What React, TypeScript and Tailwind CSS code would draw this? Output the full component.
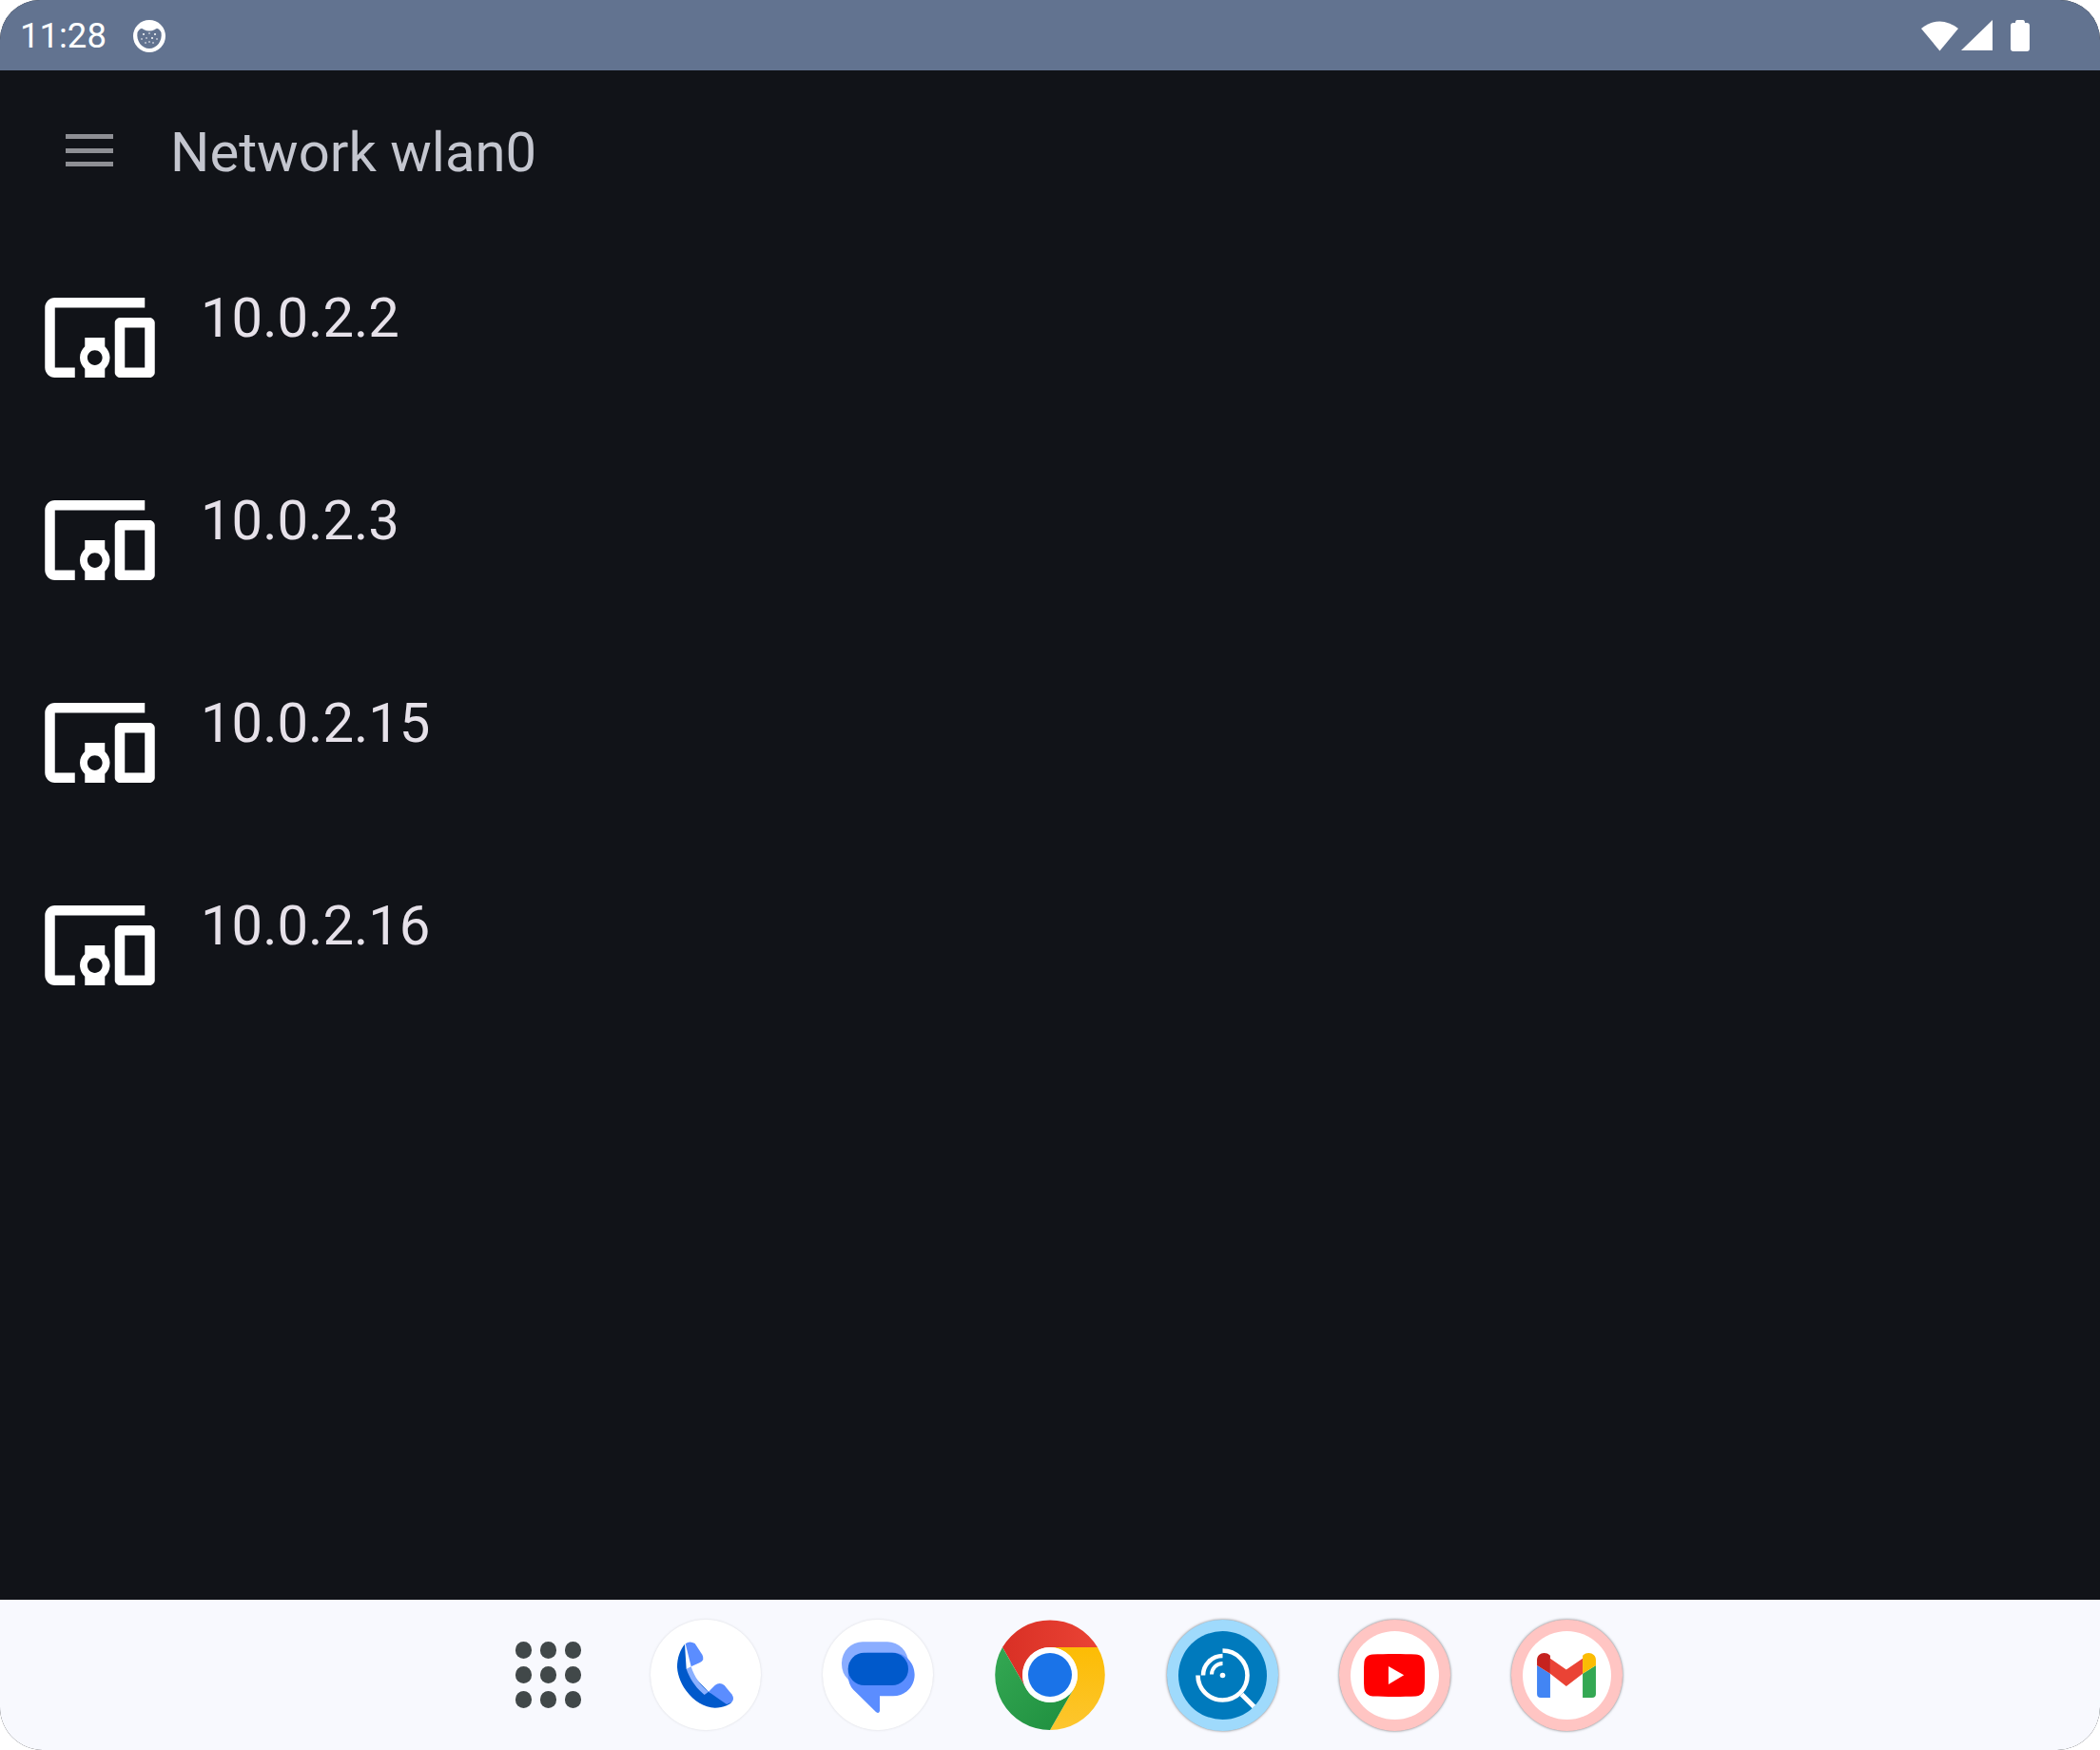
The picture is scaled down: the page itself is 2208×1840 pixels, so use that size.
const DEVICE = "M3 6h18V4H3c-1.1 0-2 .9-2 2v12c0 1.1.9 2 2 2h4v-2H3V6zm10 6H9v1.78c-.61.55-1 1.33-1 2.22s.39 1.67 1 2.22V20h4v-1.78c.61-.55 1-1.34 1-2.22s-.39-1.67-1-2.22V12zm-2 5.5c-.83 0-1.5-.67-1.5-1.5s.67-1.5 1.5-1.5 1.5.67 1.5 1.5-.67 1.5-1.5 1.5zM22 8h-6c-.5 0-1 .5-1 1v10c0 .5.5 1 1 1h6c.5 0 1-.5 1-1V9c0-.5-.5-1-1-1zm-1 10h-4v-8h4v8z";

function Row({ ip }: { ip: string }) {
  return (
    <div className="flex h-[213px] items-start pl-[42px]">
      <svg viewBox="0 0 24 24" className="h-[126px] w-[126px] shrink-0" fill="#ffffff">
        <path d={DEVICE} />
      </svg>
      <div className="ml-[43px] text-[58px] leading-[84px] font-normal text-[#e6e1e9]">{ip}</div>
    </div>
  );
}

function Phone() {
  return (
    <svg viewBox="555 98 345 345" className="h-[115px] w-[115px]">
      <path fill="#0059cb" d="M660 172C645 190 636 215 636 245C640 310 700 373 755 373C775 373 795 368 808 355L735 322L665 250Z" />
      <path fill="#8ab0ff" d="M665 250L680 243C690 275 710 305 735 322L722 332C695 310 675 280 665 250Z" />
      <path fill="#5b8dff" d="M662 171Q675 160 692 170L715 205Q724 222 708 230L680 243Z" />
      <path fill="#5b8dff" d="M735 322L755 302Q770 290 785 302L808 330Q818 345 808 355L792 362Z" />
    </svg>
  );
}

function Messages() {
  return (
    <svg viewBox="1098 98 345 345" className="h-[115px] w-[115px]">
      <rect x="1155" y="165" width="210" height="137" rx="66" fill="#8aadff" />
      <path fill="#5b8dff" d="M1243 199H1317C1355 199 1385 230 1385 268C1385 306 1355 336 1317 336H1275V383Q1272 394 1263 386L1192 316Q1175 298 1175 268C1175 230 1205 199 1243 199Z" />
      <rect x="1175" y="199" width="190" height="103" rx="51" fill="#0059cb" />
    </svg>
  );
}

function Chrome() {
  return (
    <svg viewBox="-58 -58 116 116" className="h-[116px] w-[116px]">
      <defs>
        <linearGradient id="cr" x1="0" y1="0" x2="1" y2="0"><stop offset="0" stopColor="#d93025" /><stop offset="1" stopColor="#ea4335" /></linearGradient>
        <linearGradient id="cy" x1="0" y1="0" x2="0" y2="1"><stop offset="0" stopColor="#fcbc04" /><stop offset="1" stopColor="#fdc62f" /></linearGradient>
        <linearGradient id="cg" x1="0" y1="0" x2="1" y2="1"><stop offset="0" stopColor="#34a853" /><stop offset="1" stopColor="#1e8e3e" /></linearGradient>
      </defs>
      <path fill="url(#cr)" d="M-50 -29A58 58 0 0 1 50 -29L0 -29A29 29 0 0 0 -25 14.5Z" />
      <path fill="url(#cy)" d="M50 -29A58 58 0 0 1 0 58L25 14.5A29 29 0 0 0 0 -29Z" />
      <path fill="url(#cg)" d="M0 58A58 58 0 0 1 -50 -29L-25 14.5A29 29 0 0 0 25 14.5Z" />
      <circle r="29" fill="#ffffff" />
      <circle r="23" fill="#1a73e8" />
    </svg>
  );
}

function Scanner() {
  return (
    <div className="-mx-[0.5px] flex h-[117px] w-[117px] items-center justify-center rounded-full bg-[#9fdafc] shadow-[0_0_3px_rgba(0,0,0,0.55)]">
      <svg viewBox="-46.5 -46.5 93 93" className="h-[93px] w-[93px]">
        <circle r="46.5" fill="#007abd" />
        <g fill="none" stroke="#ffffff" strokeWidth="4.6">
          <path d="M0 -26A26 26 0 1 1 -26 0" />
          <path d="M-20.5 0A20.5 20.5 0 0 1 0 -20.5" />
          <path d="M-11.5 0A11.5 11.5 0 0 1 0 -11.5" strokeWidth="4" transform="translate(0 -1)" />
          <path d="M20 20L33 33" strokeWidth="5.2" />
        </g>
        <circle r="2.8" fill="#ffffff" />
      </svg>
    </div>
  );
}

function Youtube() {
  return (
    <div className="-mx-[0.5px] flex h-[117px] w-[117px] items-center justify-center rounded-full bg-[#ffc5c3] shadow-[0_0_3px_rgba(0,0,0,0.55)]">
      <div className="flex h-[93px] w-[93px] items-center justify-center rounded-full bg-white">
        <svg viewBox="162 204 193 134" className="h-[45px] w-[64px]">
          <path fill="#ff0000" d="M190 205C230 203 287 203 327 205C343 206 353 216 354 232C356 258 356 284 354 310C353 326 343 336 327 337C287 339 230 339 190 337C174 336 164 326 163 310C161 284 161 258 163 232C164 216 174 206 190 205Z" />
          <path fill="#ffffff" d="M240 242L289 270L240 300Z" />
        </svg>
      </div>
    </div>
  );
}

function Gmail() {
  return (
    <div className="-mx-[0.5px] flex h-[117px] w-[117px] items-center justify-center rounded-full bg-[#ffc5c3] shadow-[0_0_3px_rgba(0,0,0,0.55)]">
      <div className="flex h-[93px] w-[93px] items-center justify-center rounded-full bg-white">
        <svg viewBox="710 199 187 142" className="h-[47px] w-[62px]">
          <path fill="#4285f4" d="M710 238L752 265V341H722Q710 341 710 329Z" />
          <path fill="#34a853" d="M897 238L855 265V341H885Q897 341 897 329Z" />
          <path fill="#ea4335" d="M752 216L803 252L855 216V265L803 305L752 265Z" />
          <path fill="#c5221f" d="M710 238V222C710 200 735 192 752 207V265Z" />
          <path fill="#fbbc04" d="M897 238V222C897 200 872 192 855 207V265Z" />
        </svg>
      </div>
    </div>
  );
}

function AppGrid() {
  return (
    <div className="mr-[-15.5px] grid h-[116px] w-[116px] grid-cols-3 content-center justify-center gap-x-[8.6px] gap-y-[8.6px] px-[23px]">
      {Array.from({ length: 9 }).map((_, i) => (
        <span key={i} className="h-[17.4px] w-[17.4px] rounded-full bg-[#414849]" />
      ))}
    </div>
  );
}

function Circle({ children }: { children: React.ReactNode }) {
  return (
    <div className="flex h-[116px] w-[116px] items-center justify-center rounded-full bg-white shadow-[0_0_3px_rgba(0,0,0,0.12)]">
      {children}
    </div>
  );
}

export default function App() {
  return (
    <div className="h-[1840px] w-[2208px] bg-white font-['Roboto',sans-serif]">
      <div className="flex h-full w-full flex-col overflow-hidden rounded-t-[42px] rounded-b-[45px] bg-[#111318]">
        <div className="flex h-[74px] shrink-0 items-center bg-[#627390] pl-[21px] pr-[74px]">
          <span className="pt-[3px] text-[36.5px] leading-none text-white">11:28</span>
          <svg viewBox="0 0 34 34" className="ml-[28px] mt-[2px] h-[34px] w-[34px]">
            <circle cx="17" cy="17" r="17" fill="#ffffff" />
            <path d="M4.5 13Q8 7 11 10Q17 13 23 10Q26 7 29.500 13C31 22 25 30 17 30C9 30 3 22 4.500 13Z" fill="#627390" />
            <g fill="#ffffff">
              <circle cx="11" cy="15" r="1" />
              <circle cx="17" cy="14" r="0.8" />
              <circle cx="23" cy="15" r="1" />
              <circle cx="14" cy="19" r="0.8" />
              <circle cx="20" cy="19" r="1" />
              <circle cx="9" cy="20" r="0.8" />
              <circle cx="25" cy="20" r="0.8" />
              <circle cx="13" cy="24" r="0.8" />
              <circle cx="17" cy="23" r="0.8" />
              <circle cx="21" cy="24" r="0.8" />
            </g>
          </svg>
          <div className="ml-auto flex items-center">
            <svg viewBox="0 0 39 33" className="h-[33px] w-[39px]">
              <path fill="#ffffff" d="M0 9Q19.5 -6 39 9L19.5 32.5Z" />
            </svg>
            <svg viewBox="0 0 33 32" className="ml-[3px] h-[32px] w-[33px]">
              <path fill="#ffffff" d="M0 32L33 0V32Z" />
            </svg>
            <svg viewBox="0 0 20 33" className="ml-[19px] h-[33px] w-[20px]">
              <path fill="#ffffff" d="M5 3Q5 0 7 0H13Q15 0 15 3H17Q20 3 20 6V30Q20 33 17 33H3Q0 33 0 30V6Q0 3 3 3Z" />
            </svg>
          </div>
        </div>

        <div className="flex h-[168px] shrink-0 items-center pl-[69px]">
          <div className="flex h-[34px] w-[50px] flex-col justify-between">
            <span className="h-[5px] bg-[#8e8f94]" />
            <span className="h-[5px] bg-[#8e8f94]" />
            <span className="h-[5px] bg-[#8e8f94]" />
          </div>
          <div className="ml-[60px] pt-[3px] text-[58px] leading-none text-[#c4c6cf]">Network wlan0</div>
        </div>

        <div className="flex-1 pt-[50px]">
          <Row ip="10.0.2.2" />
          <Row ip="10.0.2.3" />
          <Row ip="10.0.2.15" />
          <Row ip="10.0.2.16" />
        </div>

        <div className="flex h-[158px] shrink-0 items-center gap-[65px] bg-[#f8f9fe] pl-[518.5px]">
          <AppGrid />
          <Circle><Phone /></Circle>
          <Circle><Messages /></Circle>
          <Chrome />
          <Scanner />
          <Youtube />
          <Gmail />
        </div>
      </div>
    </div>
  );
}
